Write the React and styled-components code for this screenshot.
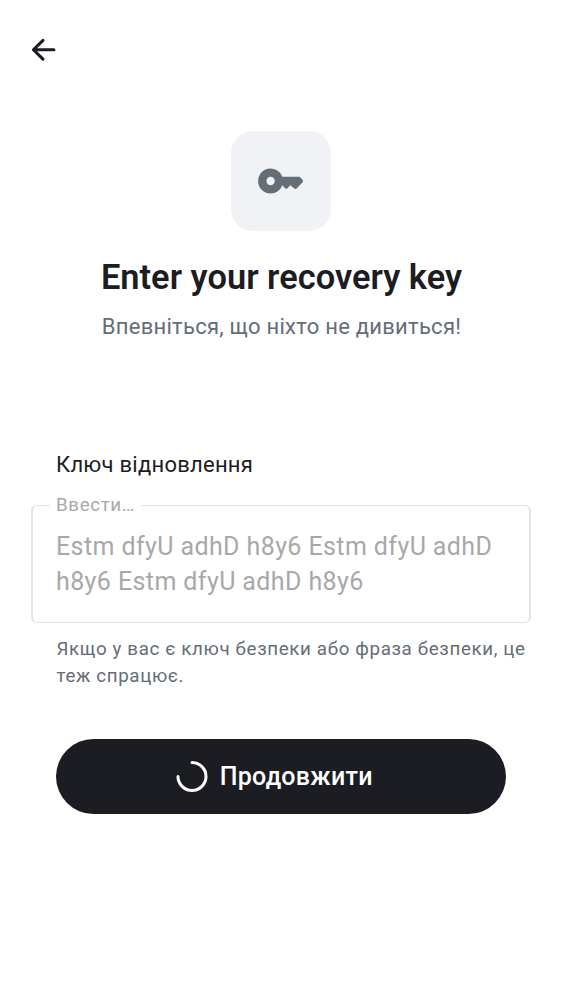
import React from 'react';
import styled, { createGlobalStyle } from 'styled-components';

const Global = createGlobalStyle`
  * { box-sizing: border-box; }
  body { margin: 0; background: #fff; font-family: Roboto, sans-serif; color: #1b1d22; }
  h1, p, fieldset, legend { margin: 0; padding: 0; }
`;
const Screen = styled.main`
  width: 562px; height: 1000px; background: #fff; overflow: hidden;
  display: flex; flex-direction: column;
`;
const TopBar = styled.header`
  height: 100px; padding-left: 25px; display: flex; align-items: center;
`;
const BackButton = styled.button`
  border: 0; background: none; padding: 0; display: flex; color: #1b1d22;
`;
const Hero = styled.section`
  padding-top: 31px; display: flex; flex-direction: column; align-items: center;
`;
const KeyTile = styled.div`
  width: 100px; height: 100px; border-radius: 22px; background: #f0f2f5;
  display: flex; align-items: center; justify-content: center;
`;
const Title = styled.h1`
  margin-top: 25px; padding-left: 1px; font-size: 34.4px; line-height: 42px; font-weight: 600; white-space: nowrap;
  letter-spacing: .02px;
`;
const Subtitle = styled.p`
  margin-top: 13px; padding-left: 1px; font-size: 22px; line-height: 31px; color: #656d77; white-space: nowrap;
  letter-spacing: .26px;
`;
const Form = styled.section`
  margin: 107px 31px 0; display: flex; flex-direction: column;
`;
const Label = styled.label`
  margin-left: 25px; font-size: 22px; line-height: 31px; letter-spacing: .25px;
`;
const Field = styled.fieldset`
  margin-top: 13px; height: 130px; border: 2px solid #e3e3e4; border-width: 1px 2px 1px 2px; border-radius: 6px;
  padding: 12px 23px 0; min-width: 0;
`;
const Legend = styled.legend`
  margin-left: -6px; padding: 0 6px; height: 24px; font-size: 18.75px; line-height: 24px; color: #a8a8a9; letter-spacing: .62px;
`;
const Placeholder = styled.p`
  font-size: 25px; line-height: 35px; color: #a8a8a9; letter-spacing: .4px; white-space: nowrap;
`;
const Hint = styled.p`
  margin: 13px 0 0 25.5px; font-size: 18.75px; line-height: 27px; letter-spacing: .63px; color: #656d77; white-space: nowrap;
`;
const Submit = styled.button`
  margin: 49px 25px 0; height: 75px; border: 0; border-radius: 38px; background: #1b1d22; color: #fff;
  padding: 0 13.5px 0 0;
  display: flex; align-items: center; justify-content: center; gap: 12px;
  font: 500 25px/31px Roboto, sans-serif; letter-spacing: .27px; white-space: nowrap;
`;

export default function App() {
  return (
    <Screen>
      <Global />
      <TopBar>
        <BackButton aria-label="Back">
          <svg width="37.5" height="37.5" viewBox="0 0 24 24" fill="none" stroke="currentColor" strokeWidth="2" strokeLinecap="round" strokeLinejoin="round"><path d="M11.5 6 5.4 12l6.1 6M5.4 12H18.5" /></svg>
        </BackButton>
      </TopBar>
      <Hero>
        <KeyTile>
          <svg width="50" height="50" viewBox="0 0 24 24" fill="#656d77"><path fillRule="evenodd" d="M7 18a6 6 0 1 1 5.65-8H20.6q.4 0 .7.3l1 1q.6.7 0 1.4l-2.7 2.8q-.7.6-1.4 0L16.5 14l-1.3 1.4q-.7.6-1.4 0L12.65 14A6 6 0 0 1 7 18m0-4a2 2 0 1 0 0-4 2 2 0 0 0 0 4" /></svg>
        </KeyTile>
        <Title>Enter your recovery key</Title>
        <Subtitle>Впевніться, що ніхто не дивиться!</Subtitle>
      </Hero>
      <Form>
        <Label>Ключ відновлення</Label>
        <Field>
          <Legend>Ввести…</Legend>
          <Placeholder>Estm dfyU adhD h8y6 Estm dfyU adhD<br />h8y6 Estm dfyU adhD h8y6</Placeholder>
        </Field>
        <Hint>Якщо у вас є ключ безпеки або фраза безпеки, це<br />теж спрацює.</Hint>
        <Submit>
          <svg width="32" height="32" viewBox="0 0 32 32" fill="none" stroke="#fff" strokeWidth="3" strokeLinecap="round"><path d="M16 1.5a14 14 0 1 1-14 14" /></svg>
          Продовжити
        </Submit>
      </Form>
    </Screen>
  );
}
